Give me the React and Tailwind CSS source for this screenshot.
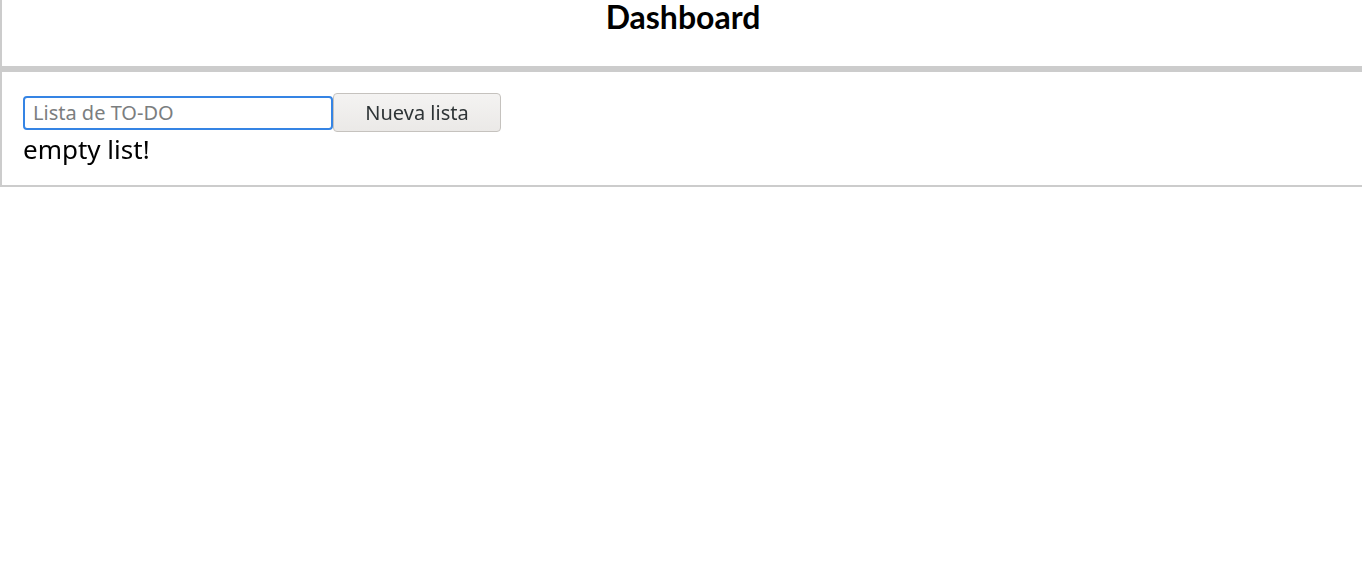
import { useState } from "react";

export default function App() {
  const [name, setName] = useState("");
  const [lists] = useState([]);

  return (
    <div className="w-[1364px] bg-white text-black font-['Noto_Sans','Open_Sans',sans-serif]">
      {/* Cabecera */}
      <header className="h-[66px] border-l-2 border-b-2 border-[#cccccc] box-content">
        <h1 className="text-[32px] leading-[34px] font-bold text-center font-['Lato','Noto_Sans',sans-serif]">Dashboard</h1>
      </header>

      {/* Listas */}
      <section className="border-l-2 border-t-4 border-b-2 border-[#cccccc] pl-[21px] pt-[21px] pb-[19px]">
        <div className="flex items-center">
          <input
            autoFocus
            value={name}
            onChange={(e) => setName(e.target.value)}
            placeholder="Lista de TO-DO"
            className="w-[310px] h-[34px] px-[8px] border-2 border-[#3584e4] rounded-[4px] text-[20px] text-[#2e3436] placeholder:text-[#7b7e7f] outline-none"
          />
          <button
            type="button"
            className="w-[168px] h-[39px] border border-[#c5c2be] rounded-[4px] bg-gradient-to-b from-[#f4f3f2] to-[#ebe9e7] text-[20px] text-[#2e3436]"
          >
            Nueva lista
          </button>
        </div>
        {lists.length === 0 && <p className="text-[26px] leading-[34px]">empty list!</p>}
      </section>
    </div>
  );
}
